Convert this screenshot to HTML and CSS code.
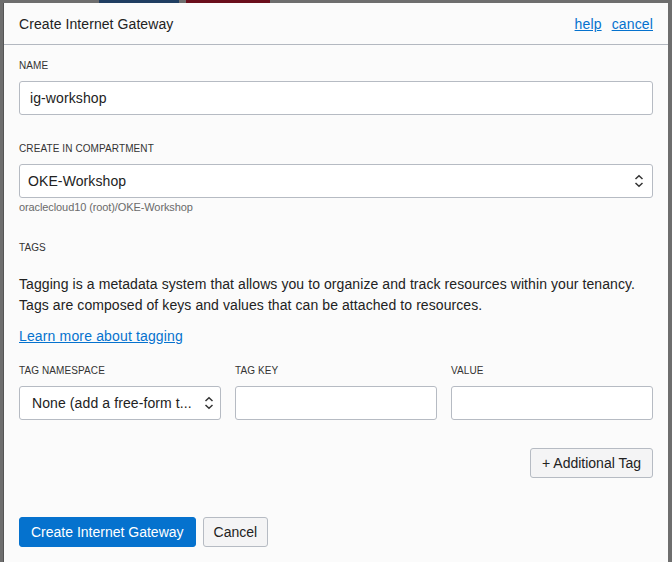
FILE: index.html
```html
<!DOCTYPE html>
<html>
<head>
<meta charset="utf-8">
<link rel="stylesheet" href="styles.css">
</head>
<body>
<div class="backdrop-top">
  <span class="bd-grey"></span>
  <span class="bd-blue"></span>
  <span class="bd-gap"></span>
  <span class="bd-red"></span>
</div>
<div class="dialog">
  <div class="header">
    <h1 class="title">Create Internet Gateway</h1>
    <div class="header-links">
      <a href="#" class="link">help</a>
      <a href="#" class="link">cancel</a>
    </div>
  </div>
  <div class="content">
    <div class="field">
      <label class="label">NAME</label>
      <div class="input"><span class="input-text">ig-workshop</span></div>
    </div>
    <div class="field field-comp">
      <label class="label">CREATE IN COMPARTMENT</label>
      <div class="input select"><span class="input-text select-text">OKE-Workshop</span>
        <svg class="chev" width="10" height="14" viewBox="0 0 10 14"><path d="M1.5 5 L5 1.8 L8.5 5" fill="none" stroke="#333" stroke-width="1.5"/><path d="M1.5 9 L5 12.2 L8.5 9" fill="none" stroke="#333" stroke-width="1.5"/></svg>
      </div>
      <div class="helper">oraclecloud10 (root)/OKE-Workshop</div>
    </div>
    <div class="tags">
      <div class="label">TAGS</div>
      <p class="desc">Tagging is a metadata system that allows you to organize and track resources within your tenancy. Tags are composed of keys and values that can be attached to resources.</p>
      <a href="#" class="link learn">Learn more about tagging</a>
      <div class="tag-grid">
        <div class="tag-col">
          <label class="label">TAG NAMESPACE</label>
          <div class="input select ns-select"><span class="input-text ns-text">None (add a free-form t...</span>
            <svg class="chev" width="10" height="14" viewBox="0 0 10 14"><path d="M1.5 5 L5 1.8 L8.5 5" fill="none" stroke="#333" stroke-width="1.5"/><path d="M1.5 9 L5 12.2 L8.5 9" fill="none" stroke="#333" stroke-width="1.5"/></svg>
          </div>
        </div>
        <div class="tag-col">
          <label class="label">TAG KEY</label>
          <div class="input"></div>
        </div>
        <div class="tag-col">
          <label class="label">VALUE</label>
          <div class="input"></div>
        </div>
      </div>
      <div class="add-row">
        <button class="btn btn-add">+ Additional Tag</button>
      </div>
    </div>
    <div class="actions">
      <button class="btn btn-primary">Create Internet Gateway</button>
      <button class="btn">Cancel</button>
    </div>
  </div>
</div>
</body>
</html>
```
FILE: styles.css
```css
* { box-sizing: border-box; }
html, body { margin: 0; padding: 0; }
body {
  background: #6e6e6e;
  font-family: "Liberation Sans", Arial, sans-serif;
  color: #333;
  width: 672px;
  height: 562px;
  overflow: hidden;
}
.backdrop-top { display: flex; height: 3px; }
.bd-grey { width: 99px; background: #6e6e6e; }
.bd-blue { width: 80px; background: #203e62; }
.bd-gap { width: 7px; background: #6e6e6e; }
.bd-red { width: 84px; background: #6a0e1b; }
.dialog {
  margin-left: 3px;
  width: 665px;
  height: 559px;
  background: #fbfbfb;
  border-left: 1px solid #555;
}
.header {
  height: 42px;
  border-bottom: 1px solid #b3b8c0;
  display: flex;
  align-items: center;
  justify-content: space-between;
  padding: 0 15px 0 15px;
}
.title {
  margin: 0;
  font-size: 14px;
  font-weight: normal;
  color: #222;
  line-height: 20px;
  letter-spacing: 0.08px;
}
.header-links { display: flex; gap: 10px; }
.link {
  color: #0572ce;
  text-decoration: underline;
  font-size: 14px;
  line-height: 20px;
  letter-spacing: 0.15px;
}
.content { padding: 13px 15px 0 15px; }
.label {
  display: block;
  font-size: 10px;
  line-height: 15px;
  color: #333;
  margin-bottom: 8px;
  letter-spacing: 0.1px;
}
.input {
  height: 34px;
  background: #fff;
  border: 1px solid #b6bbc3;
  border-radius: 3px;
  display: flex;
  align-items: center;
  padding: 0 10px;
  font-size: 14px;
  color: #222;
  letter-spacing: 0.1px;
}
.select { padding: 0 8px 0 8px; }
.input-text { flex: 1; white-space: nowrap; overflow: hidden; }
.ns-select { padding: 0 6px 0 12px; }
.chev { flex: none; }
.field-comp { margin-top: 26px; }
.helper {
  font-size: 11px;
  line-height: 14px;
  color: #6a6a6a;
  margin-top: 2px;
  letter-spacing: -0.1px;
}
.tags { margin-top: 26px; }
.tags > .label { margin-bottom: 19px; }
.desc {
  margin: 0;
  font-size: 14px;
  line-height: 21px;
  color: #222;
  letter-spacing: 0.08px;
}
.learn { display: inline-block; margin-top: 10px; line-height: 21px; }
.tag-grid {
  display: grid;
  grid-template-columns: repeat(3, 202px);
  column-gap: 14px;
  margin-top: 16px;
}
.add-row { display: flex; justify-content: flex-end; margin-top: 28px; }
.btn {
  font-family: "Liberation Sans", Arial, sans-serif;
  font-size: 14px;
  height: 30px;
  padding: 0 10px;
  background: #f4f4f5;
  border: 1px solid #b6bbc3;
  border-radius: 3px;
  color: #222;
  cursor: pointer;
}
.btn-add { padding: 0 11px; }
.actions { display: flex; gap: 7px; margin-top: 39px; }
.btn-primary {
  background: #0572ce;
  border-color: #0572ce;
  color: #fff;
  padding: 0 11px;
}
```
